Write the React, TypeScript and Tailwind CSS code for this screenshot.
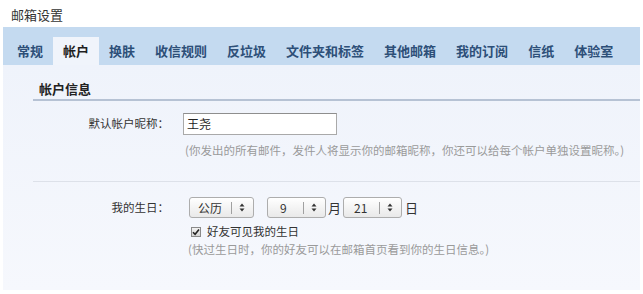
const tabs = ['常规', '帐户', '换肤', '收信规则', '反垃圾', '文件夹和标签', '其他邮箱', '我的订阅', '信纸', '体验室']

function Arrows() {
  return (
    <svg width="6" height="9" viewBox="0 0 6 9" className="shrink-0">
      <path d="M3 0.5 L5.5 3.5 L0.5 3.5 Z" fill="#333" />
      <path d="M3 8.5 L5.5 5.5 L0.5 5.5 Z" fill="#333" />
    </svg>
  )
}

function FakeSelect({ value, width, padLeft }: { value: string; width: string; padLeft: string }) {
  return (
    <div
      className={`${width} h-[21px] flex items-center rounded-[3px] border border-[#adadad] bg-linear-to-b from-white to-[#e9e9e9] text-[12px] text-[#333]`}
    >
      <span className={`flex-1 ${padLeft}`}>{value}</span>
      <span className="w-px h-[12px] bg-[#a0a0a0]" />
      <span className="ml-[7px] mr-[8px] flex items-center">
        <Arrows />
      </span>
    </div>
  )
}

export default function App() {
  return (
    <div className="w-[643px] h-[294px] bg-white overflow-hidden font-['Noto_Sans_CJK_SC','Liberation_Sans',sans-serif] text-[#333]">
      <div className="h-[27px] pl-[11px] pt-[6px] text-[13px] leading-[18px] text-[#333]">邮箱设置</div>

      <div className="mx-[3px] h-[38px] bg-[#c4daf0] flex items-end pl-[4px]">
        {tabs.map((t) => (
          <div
            key={t}
            className={
              t === '帐户'
                ? 'h-[28px] px-[10px] flex items-center text-[13px] font-bold text-[#1f1f1f] bg-[#f0f4fb]'
                : 'h-[28px] px-[10px] flex items-center text-[13px] font-bold text-[#2d4f78]'
            }
          >
            {t}
          </div>
        ))}
      </div>

      <div className="mx-[3px] h-[225px] bg-linear-to-b from-[#eff3fb] to-[#f6f8fd]">
        <div className="ml-[30px] border-b-2 border-[#b6c2d4] pl-[6px] pt-[16px] pb-[2px] text-[13px] leading-[16px] font-bold text-[#222]">
          帐户信息
        </div>

        <div className="mt-[12px] flex items-center h-[22px] text-[11.5px]">
          <div className="w-[166px] text-right">默认帐户昵称：</div>
          <div className="ml-[14px] w-[154px] h-[22px] border border-[#a9a9a9] border-t-[#8e8e8e] bg-white flex items-center pl-[3px] text-[12px] text-[#222]">
            王尧
          </div>
        </div>
        <div className="mt-[8px] ml-[182px] text-[11.5px] leading-[14px] text-[#9a9a9a] whitespace-nowrap">
          (你发出的所有邮件，发件人将显示你的邮箱昵称，你还可以给每个帐户单独设置昵称。)
        </div>

        <div className="mt-[24px] ml-[30px] border-t border-[#dde1e9]" />

        <div className="mt-[15px] flex items-center h-[21px] text-[11.5px]">
          <div className="w-[166px] text-right">我的生日：</div>
          <div className="ml-[20px] flex items-center">
            <FakeSelect value="公历" width="w-[65px]" padLeft="pl-[8px]" />
            <div className="ml-[13px]">
              <FakeSelect value="9" width="w-[59px]" padLeft="pl-[12px]" />
            </div>
            <span className="mx-[2px] text-[13px]">月</span>
            <FakeSelect value="21" width="w-[59px]" padLeft="pl-[10px]" />
            <span className="ml-[3px] text-[13px]">日</span>
          </div>
        </div>

        <div className="mt-[7px] ml-[188px] flex items-center h-[14px] text-[11.5px]">
          <span className="w-[10px] h-[10px] border border-[#8a8a8a] bg-linear-to-b from-[#f2f2f2] to-[#d4d4d4] flex items-center justify-center">
            <svg width="8" height="8" viewBox="0 0 8 8">
              <path d="M1 4.2 L3.1 6.3 L7 1.5" stroke="#222" strokeWidth="1.6" fill="none" />
            </svg>
          </span>
          <span className="ml-[6px] text-[#333]">好友可见我的生日</span>
        </div>
        <div className="mt-[3px] ml-[185px] text-[11.5px] leading-[14px] text-[#9a9a9a] whitespace-nowrap">
          (快过生日时，你的好友可以在邮箱首页看到你的生日信息。)
        </div>
      </div>
    </div>
  )
}
